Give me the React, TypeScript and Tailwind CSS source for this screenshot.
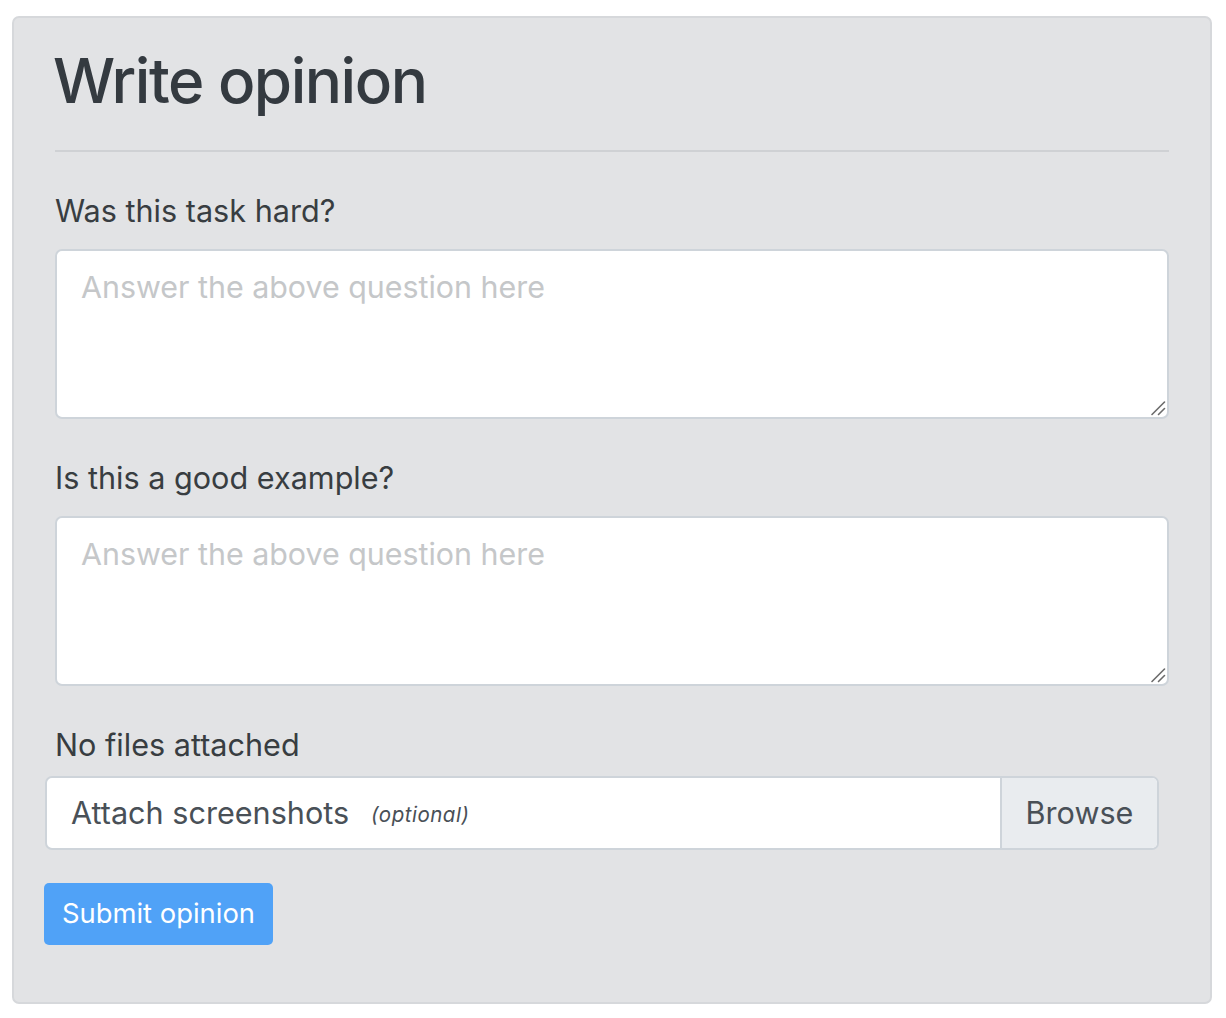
import React, { useState } from 'react';

const font = { fontFamily: 'Inter, "Noto Sans", sans-serif' };

const ResizeGrip = () => (
  <svg
    className="absolute right-[3px] bottom-[3px] pointer-events-none"
    width="16"
    height="16"
    viewBox="0 0 16 16"
    fill="none"
    stroke="#6b6b6b"
    strokeWidth="1.6"
    strokeLinecap="round"
  >
    <path d="M2 14.5L14.5 2" />
    <path d="M8.5 14.5L14.5 8.5" />
  </svg>
);

const QuestionField: React.FC<{
  id: string;
  label: string;
  value: string;
  onChange: (value: string) => void;
}> = ({ id, label, value, onChange }) => (
  <div className="mt-[36px]">
    <label htmlFor={id} className="block text-[30.6px] leading-[45px] text-[#383d41]">
      {label}
    </label>
    <div className="relative mt-[16px]">
      <textarea
        id={id}
        value={value}
        onChange={(e) => onChange(e.target.value)}
        placeholder="Answer the above question here"
        className="block w-full h-[170px] resize-none bg-white border-2 border-[#ced4da] rounded-[7px] px-[24px] py-[14px] text-[30.4px] leading-[45px] text-[#495057] placeholder:text-[#c5c7c9] outline-none"
      />
      <ResizeGrip />
    </div>
  </div>
);

export default function App() {
  const [hard, setHard] = useState('');
  const [good, setGood] = useState('');

  return (
    <div className="pt-[16px] pl-[12px]" style={font}>
      <form
        onSubmit={(e) => e.preventDefault()}
        className="w-[1200px] h-[988px] bg-[#e2e3e5] border-2 border-[#d6d8db] rounded-[7px] px-[41px] pt-[25px]"
      >
        <h1 className="-ml-[2px] text-[62px] leading-[76px] font-medium text-[#343a40] tracking-[-1.5px]">
          Write opinion
        </h1>
        <hr className="mt-[31px] border-0 border-t-2 border-[#cfd1d4]" />

        <QuestionField id="hard" label="Was this task hard?" value={hard} onChange={setHard} />
        <QuestionField id="good" label="Is this a good example?" value={good} onChange={setGood} />

        <div className="mt-[36px]">
          <div className="text-[30.6px] leading-[45px] text-[#383d41]">No files attached</div>
          <label className="mt-[9px] -ml-[10px] flex h-[74px] w-[1114px] bg-white border-2 border-[#ced4da] rounded-[7px] overflow-hidden cursor-pointer">
            <input type="file" className="hidden" />
            <span className="flex-1 flex items-center pl-[24px] text-[30.6px] text-[#495057]">
              Attach screenshots
              <i className="ml-[22px] mt-[4px] text-[20.5px] tracking-[0.5px]">(optional)</i>
            </span>
            <span className="w-[157px] flex items-center justify-center bg-[#e9ecef] border-l-2 border-[#ced4da] text-[30.6px] text-[#495057]">
              Browse
            </span>
          </label>
        </div>

        <button
          type="submit"
          className="mt-[33px] -ml-[11px] h-[62px] w-[229px] bg-[#50a2f7] rounded-[5px] text-white text-[27.4px]"
        >
          Submit opinion
        </button>
      </form>
    </div>
  );
}
